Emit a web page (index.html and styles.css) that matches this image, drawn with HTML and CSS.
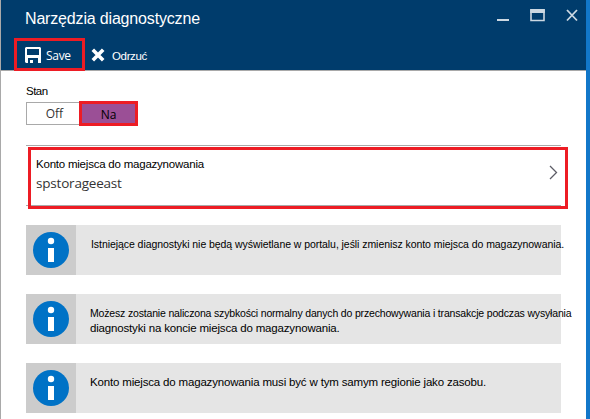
FILE: index.html
```html
<!DOCTYPE html>
<html lang="pl">
<head>
<meta charset="utf-8">
<title>Narzędzia diagnostyczne</title>
<link rel="stylesheet" href="styles.css">
</head>
<body>
<div class="blade">
  <header class="header">
    <div class="titlebar">
      <h1 class="title">Narzędzia diagnostyczne</h1>
      <svg class="window-controls" width="82" height="14" viewBox="0 0 82 14">
        <path d="M0 11h12" stroke="#ccd8e2" stroke-width="2"/>
        <path d="M34 1h13v10.500H34z" fill="none" stroke="#ccd8e2" stroke-width="1.6"/>
        <path d="M33.200 2h14.600" stroke="#ccd8e2" stroke-width="4"/>
        <path d="M70 1l10 10.500M80 1L70 11.500" stroke="#ccd8e2" stroke-width="1.800"/>
      </svg>
    </div>
    <div class="toolbar">
      <button class="command save">
        <svg width="16" height="16" viewBox="0 0 16 16">
          <path fill="#fff" fill-rule="evenodd" d="M1 0h14l1 1v15h-3v-5H3v5H1l-1-1V1zM2 2v6h12V2z"/>
          <path fill="#fff" d="M5 13h3v3H5z"/>
        </svg>
        <span class="save-label">Save</span>
      </button>
      <button class="command discard">
        <svg width="14" height="14" viewBox="0 0 14 14"><path d="M1.800 1.800l10.400 10.400M12.200 1.800L1.800 12.200" stroke="#fff" stroke-width="3.600"/></svg>
        <span class="discard-label">Odrzuć</span>
      </button>
    </div>
  </header>
  <main class="content">
    <div class="field-label"><span>Stan</span></div>
    <div class="toggle">
      <div class="option off">Off</div>
      <div class="option on">Na</div>
    </div>
    <section class="picker">
      <div class="picker-box">
        <div>
          <div class="picker-label"><span>Konto miejsca do magazynowania</span></div>
          <div class="picker-value"><span>spstorageeast</span></div>
        </div>
        <svg class="chevron" width="9" height="15" viewBox="0 0 9 15"><path d="M1 1l6.500 6.500L1 14" fill="none" stroke="#5d5d66" stroke-width="1.300"/></svg>
      </div>
    </section>
    <div class="info">
      <div class="info-icon"><svg width="36" height="36" viewBox="0 0 36 36"><circle cx="18" cy="18" r="18" fill="#0072c6"/><circle cx="18" cy="9" r="3.200" fill="#fff"/><path d="M15 16h6v14h-6z" fill="#fff"/></svg></div>
      <p class="info-text first"><span class="line a">Istniejące diagnostyki nie będą wyświetlane w portalu, jeśli zmienisz konto miejsca do magazynowania.</span></p>
    </div>
    <div class="info">
      <div class="info-icon"><svg width="36" height="36" viewBox="0 0 36 36"><circle cx="18" cy="18" r="18" fill="#0072c6"/><circle cx="18" cy="9" r="3.200" fill="#fff"/><path d="M15 16h6v14h-6z" fill="#fff"/></svg></div>
      <p class="info-text"><span class="line b">Możesz zostanie naliczona szybkości normalny danych do przechowywania i transakcje podczas wysyłania</span><span class="line c">diagnostyki na koncie miejsca do magazynowania.</span></p>
    </div>
    <div class="info">
      <div class="info-icon"><svg width="36" height="36" viewBox="0 0 36 36"><circle cx="18" cy="18" r="18" fill="#0072c6"/><circle cx="18" cy="9" r="3.200" fill="#fff"/><path d="M15 16h6v14h-6z" fill="#fff"/></svg></div>
      <p class="info-text"><span class="line d">Konto miejsca do magazynowania musi być w tym samym regionie jako zasobu.</span></p>
    </div>
  </main>
</div>
</body>
</html>
```
FILE: styles.css
```css
* { box-sizing: border-box; }
body { margin: 0; background: #fff; font-family: "Liberation Sans", sans-serif; color: #000; }
svg { display: block; flex: none; }
.blade { width: 590px; height: 419px; overflow: hidden; border-left: 1px solid #a9a9a9; border-right: 4px solid #1277c9; }
.header { height: 71px; margin-left: -1px; background: #003c6c; border-left: 1px solid #1c507b; border-bottom: 1px solid #a9a9a9; color: #fff; }
.titlebar { display: flex; height: 38px; justify-content: space-between; padding: 9px 7px 0 24px; }
.title { margin: 0; font: 16px/20px "Liberation Sans", sans-serif; letter-spacing: -0.17px; white-space: nowrap; }
.toolbar { display: flex; padding-left: 13px; }
.command { display: flex; border: 0; background: none; padding: 0; color: #fff; font-size: 12px; white-space: nowrap; }
.save { width: 71px; height: 33px; border: 3px solid #ed1c24; padding: 6px 0 0 8px; gap: 5px; }
.save-label { font: 12px/16px "Open Sans", sans-serif; letter-spacing: -0.3px; margin-top: 1px; }
.discard { padding: 10px 0 0 6px; gap: 7px; height: 32px; }
.discard-label { font: 11.500px/16px "Liberation Sans", sans-serif; letter-spacing: -0.35px; }
.content { padding: 13px 0 0 25px; width: 560px; }
.field-label { height: 17px; font: 11.500px/15px "Liberation Sans", sans-serif; letter-spacing: -0.5px; }
.toggle { display: flex; height: 25px; align-items: center; }
.option { text-align: center; }
.off { width: 53px; height: 23px; border: 1px solid #a9a9a9; border-right: 0; font: 12px/21px "Open Sans", sans-serif; color: #333; padding-left: 3px; }
.on { width: 59px; height: 25px; border: 3px solid #ed1c24; background: #9b4f96; font: 12px/21px "Open Sans", sans-serif; }
.picker { height: 61px; margin-top: 19px; padding: 2px 0 0 2px; border-top: 1px solid #a9a9a9; border-bottom: 1px solid #a9a9a9; }
.picker-box { width: 540px; height: 62px; margin-top: -1px; border: 3px solid #ed1c24; display: flex; justify-content: space-between; padding: 7px 7px 0 5px; }
.picker-label { font: 11.500px/15px "Liberation Sans", sans-serif; letter-spacing: -0.22px; }
.picker-value { font: 13.500px/20px "Open Sans", sans-serif; letter-spacing: -0.2px; color: #333; margin-top: 1px; }
.chevron { margin-top: 8px; }
.info { display: flex; width: 535px; height: 50px; margin-top: 19px; background: #e5e5e5; }
.info-icon { width: 50px; flex: none; padding: 7px; background: #ccc; }
.info-text { margin: 0; padding: 12px 0 0 14px; white-space: nowrap; font-size: 11.500px; letter-spacing: -0.17px; line-height: 15px; }
.info-text.first { padding-left: 15px; }
.line { display: block; width: max-content; }
.a, .b { font-size: 10.500px; }
.a { letter-spacing: -0.06px; }
```
